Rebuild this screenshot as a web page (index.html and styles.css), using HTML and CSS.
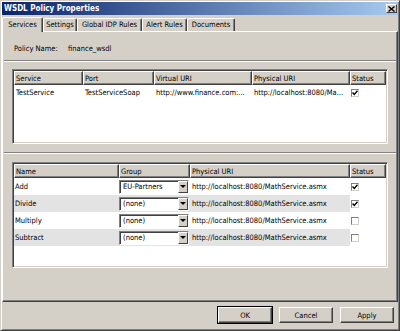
FILE: index.html
```html
<!DOCTYPE html>
<html lang="en">
<head>
  <meta charset="UTF-8">
  <meta name="viewport" content="width=device-width, initial-scale=1.0">
  <link rel="stylesheet" href="styles.css">
  <title>WSDL Policy Properties</title>
</head>
<body>
  <div class="window">
    <div class="titlebar">
      <span class="title">WSDL Policy Properties</span>
      <span class="close">
        <svg width="7" height="6" viewBox="0 0 7 6"><path d="M0.5 0.5 L6.5 5.5 M6.5 0.5 L0.5 5.5" stroke="#000" stroke-width="1.4"/></svg>
      </span>
    </div>

    <div class="tabs">
      <div class="tab active tab-services">Services</div>
      <div class="tab tab-settings">Settings</div>
      <div class="tab tab-idp">Global IDP Rules</div>
      <div class="tab tab-alert">Alert Rules</div>
      <div class="tab tab-docs">Documents</div>
    </div>

    <div class="panel">
      <div class="policy">
        <span class="label">Policy Name:</span>
        <span>finance_wsdl</span>
      </div>

      <div class="pane">
        <div class="listview lv-services">
          <table>
            <tr>
              <th class="c-service">Service</th>
              <th class="c-port">Port</th>
              <th class="c-virtual">Virtual URI</th>
              <th class="c-physical">Physical URI</th>
              <th class="c-status">Status</th>
            </tr>
            <tr>
              <td>TestService</td>
              <td>TestServiceSoap</td>
              <td>http://www.finance.com:...</td>
              <td>http://localhost:8080/Ma...</td>
              <td class="status"><span class="check on"></span></td>
            </tr>
          </table>
        </div>
      </div>

      <div class="pane pane-ops">
        <div class="listview lv-ops">
          <table>
            <tr>
              <th class="c-name">Name</th>
              <th class="c-group">Group</th>
              <th class="c-uri">Physical URI</th>
              <th class="c-status">Status</th>
            </tr>
            <tr>
              <td>Add</td>
              <td class="group"><div class="combo"><span class="combo-text">EU-Partners</span><span class="combo-btn"></span></div></td>
              <td>http://localhost:8080/MathService.asmx</td>
              <td class="status"><span class="check on"></span></td>
            </tr>
            <tr class="alt">
              <td>Divide</td>
              <td class="group"><div class="combo"><span class="combo-text">(none)</span><span class="combo-btn"></span></div></td>
              <td>http://localhost:8080/MathService.asmx</td>
              <td class="status"><span class="check on"></span></td>
            </tr>
            <tr>
              <td>Multiply</td>
              <td class="group"><div class="combo"><span class="combo-text">(none)</span><span class="combo-btn"></span></div></td>
              <td>http://localhost:8080/MathService.asmx</td>
              <td class="status"><span class="check"></span></td>
            </tr>
            <tr class="alt">
              <td>Subtract</td>
              <td class="group"><div class="combo"><span class="combo-text">(none)</span><span class="combo-btn"></span></div></td>
              <td>http://localhost:8080/MathService.asmx</td>
              <td class="status"><span class="check"></span></td>
            </tr>
          </table>
        </div>
      </div>
    </div>

    <div class="actions">
      <button class="btn default">OK</button>
      <button class="btn">Cancel</button>
      <button class="btn">Apply</button>
    </div>
  </div>
</body>
</html>
```

FILE: styles.css
```css
*, *:before, *:after {
  margin: 0;
  padding: 0;
  box-sizing: border-box;
}
body {
  background: #d4d0c8;
  font-family: "DejaVu Sans Condensed", "DejaVu Sans", sans-serif;
  font-stretch: condensed;
  font-size: 7.5px;
  color: #000;
}

.window {
  width: 400px;
  height: 331px;
  border: 1px solid;
  border-color: #d4d0c8 #404040 #404040 #d4d0c8;
  padding: 1px;
  box-shadow: inset 1px 1px #fff, inset -1px -1px #808080;
  display: flex;
  flex-direction: column;
}

/* title bar */
.titlebar {
  flex: none;
  height: 13px;
  padding: 0 1px 0 2px;
  background: linear-gradient(to right, #0a246a, #a6caf0);
  display: flex;
  align-items: center;
  justify-content: space-between;
}
.title {
  color: #fff;
  font-weight: bold;
  font-size: 8px;
}
.close {
  width: 11px;
  height: 9px;
  background: #d4d0c8;
  border: 1px solid;
  border-color: #fff #404040 #404040 #fff;
  display: flex;
  align-items: center;
  justify-content: center;
}

/* tabs */
.tabs {
  flex: none;
  height: 16px;
  display: flex;
  align-items: flex-end;
  position: relative;
  z-index: 1;
}
.tab {
  height: 13px;
  line-height: 11px;
  border: 1px solid;
  border-bottom: none;
  border-color: #fff #404040 transparent #fff;
  border-radius: 2px 2px 0 0;
  box-shadow: inset -1px 0 #808080;
  text-align: center;
  white-space: nowrap;
}
.tab.active {
  height: 15px;
  line-height: 13px;
  margin-bottom: -1px;
  background: #d4d0c8;
}
.tab-services { width: 41px; }
.tab-settings { width: 34px; }
.tab-idp { width: 65px; }
.tab-alert { width: 45px; }
.tab-docs { width: 48px; }

/* tab page */
.panel {
  flex: 1;
  border: 1px solid;
  border-color: #fff #404040 #404040 #fff;
  box-shadow: inset -1px -1px #808080;
  display: flex;
  flex-direction: column;
}
.policy {
  height: 28px;
  padding: 12px 0 0 11px;
  line-height: 10px;
  display: flex;
}
.policy .label {
  width: 54px;
}

.pane {
  border-top: 1px solid #808080;
  box-shadow: inset 0 1px #fff;
  margin: 0 1px;
  padding: 8px;
}
.pane-ops {
  padding-top: 9px;
}

.listview {
  background: #fff;
  border: 1px solid;
  border-color: #808080 #fff #fff #808080;
  box-shadow: inset 1px 1px #404040, inset -1px -1px #d4d0c8;
  padding: 1px;
  overflow: hidden;
}
.lv-services {
  height: 75px;
}
.lv-ops {
  height: 106px;
}

table {
  width: 372px;
  table-layout: fixed;
  border-collapse: separate;
  border-spacing: 0;
}
th {
  height: 14px;
  background: #d4d0c8;
  border: 1px solid;
  border-color: #fff #404040 #404040 #fff;
  box-shadow: inset -1px -1px #808080;
  padding: 0 2px 0 1px;
  text-align: left;
  font-weight: normal;
  white-space: nowrap;
}
td {
  padding: 0 2px;
  white-space: nowrap;
  overflow: hidden;
}
.lv-services td {
  height: 15px;
}
.lv-ops td {
  height: 17px;
}
.lv-ops td:first-child {
  padding-left: 1px;
}
tr.alt td:not(.status) {
  background: #e3e3e3;
}

.c-service { width: 69px; }
.c-port { width: 71px; }
.c-virtual { width: 98px; }
.c-physical { width: 98px; }
.c-status { width: 36px; }
.c-name { width: 105px; }
.c-group { width: 71px; }
.c-uri { width: 160px; }

td.group {
  padding: 0;
}
.combo {
  width: 70px;
  height: 14px;
  display: flex;
  background: #fff;
  border: 1px solid;
  border-color: #808080 #fff #fff #808080;
  box-shadow: inset 1px 1px #404040;
}
.combo-text {
  flex: 1;
  padding-left: 3px;
  line-height: 12px;
}
.combo-btn {
  width: 10px;
  height: 12px;
  background: #d4d0c8;
  border: 1px solid;
  border-color: #fff #404040 #404040 #fff;
  display: flex;
  align-items: center;
  justify-content: center;
}
.combo-btn::after {
  content: "";
  border-left: 3px solid transparent;
  border-right: 3px solid transparent;
  border-top: 3px solid #000;
}

td.status {
  padding-left: 1px;
}
.check {
  display: block;
  width: 8px;
  height: 8px;
  background: #fff;
  border: 1px solid;
  border-color: #808080 #d4d0c8 #d4d0c8 #808080;
}
.check.on {
  background: #fff url("data:image/svg+xml,%3Csvg xmlns='http://www.w3.org/2000/svg' width='6' height='6'%3E%3Cpath d='M0.5 2.5 L2.3 4.5 L5.5 0.8' stroke='black' stroke-width='1.4' fill='none'/%3E%3C/svg%3E") no-repeat center;
}

/* dialog buttons */
.actions {
  flex: none;
  height: 27px;
  display: flex;
  justify-content: flex-end;
  gap: 7px;
  padding: 5px 4px 0 0;
}
.btn {
  width: 54px;
  height: 16px;
  background: #d4d0c8;
  border: 1px solid;
  border-color: #fff #404040 #404040 #fff;
  box-shadow: inset -1px -1px #808080;
  font: inherit;
  color: #000;
}
.btn.default {
  outline: 1px solid #000;
}
```
